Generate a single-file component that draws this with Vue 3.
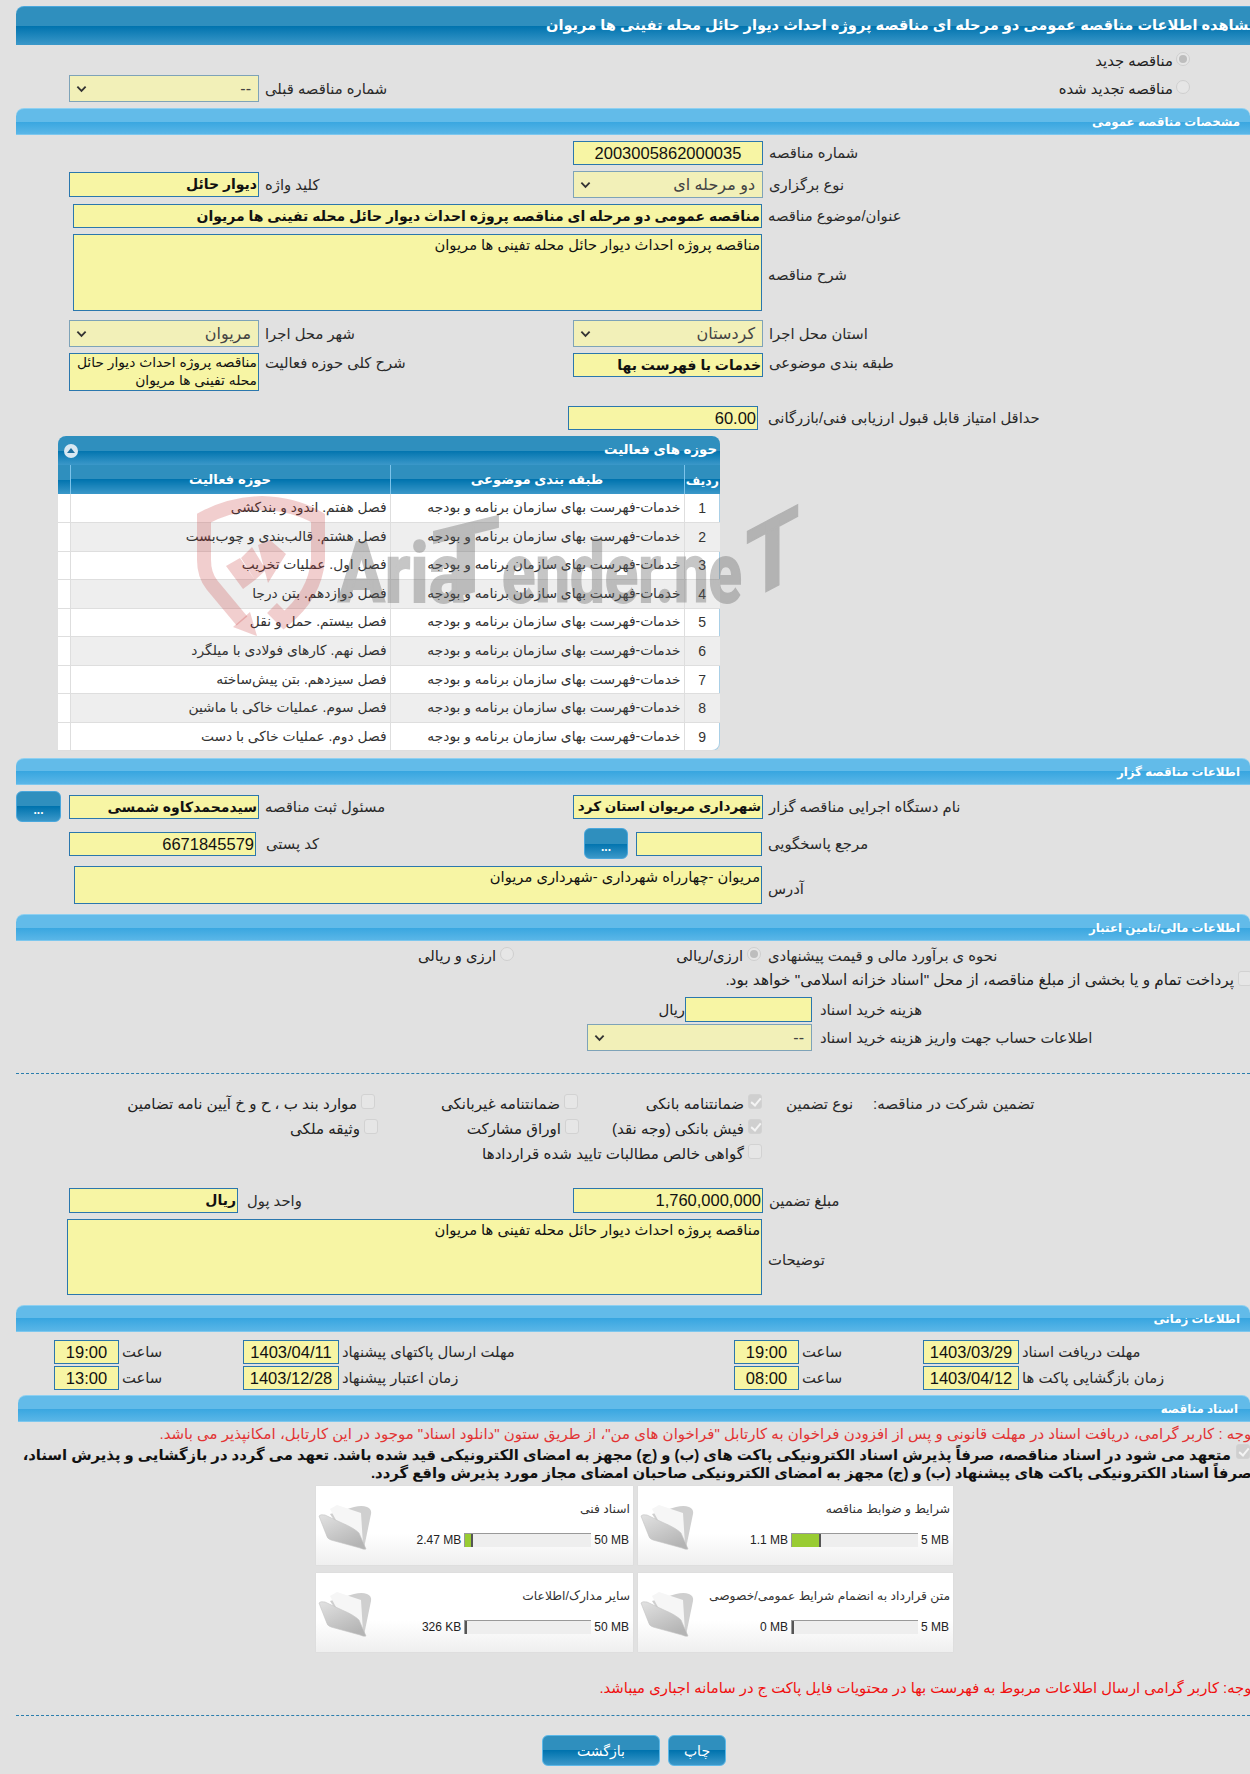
<script setup>
const activities = [
  'فصل هفتم. اندود و بندکشی',
  'فصل هشتم. قالب‌بندی و چوب‌بست',
  'فصل اول. عملیات تخریب',
  'فصل دوازدهم. بتن درجا',
  'فصل بیستم. حمل و نقل',
  'فصل نهم. کارهای فولادی با میلگرد',
  'فصل سیزدهم. بتن پیش‌ساخته',
  'فصل سوم. عملیات خاکی با ماشین',
  'فصل دوم. عملیات خاکی با دست'
]
const cards = [
  { title: 'اسناد فنی', used: '2.47 MB', max: '50 MB', fill: 6 },
  { title: 'شرایط و ضوابط مناقصه', used: '1.1 MB', max: '5 MB', fill: 27 },
  { title: 'سایر مدارک/اطلاعات', used: '326 KB', max: '50 MB', fill: 0 },
  { title: 'متن قرارداد به انضمام شرایط عمومی/خصوصی', used: '0 MB', max: '5 MB', fill: 0 }
]
</script>

<template>
  <div class="page">
    <div class="head" dir="rtl">مشاهده اطلاعات مناقصه عمومی دو مرحله ای مناقصه پروژه احداث دیوار حائل محله تفینی ها مریوان</div>

    <div class="radio-line first"><span dir="rtl">مناقصه جدید</span><i class="radio on"></i></div>
    <div class="row prev">
      <div class="field">
        <div class="select w190"><svg class="chev" viewBox="0 0 12 8"><path d="M1.5 1.5 6 6l4.5-4.5" /></svg><span>--</span></div>
        <span class="lab" dir="rtl">شماره مناقصه قبلی</span>
      </div>
      <div class="radio-line"><span dir="rtl">مناقصه تجدید شده</span><i class="radio"></i></div>
    </div>

    <div class="bar">مشخصات مناقصه عمومی</div>

    <div class="row mt6">
      <div class="col-l"></div>
      <div class="field"><div class="box w190 num center">2003005862000035</div><span class="lab" dir="rtl">شماره مناقصه</span></div>
    </div>
    <div class="row mt6">
      <div class="col-l field"><div class="box w190 h25 big" dir="rtl">دیوار حائل</div><span class="lab" dir="rtl">کلید واژه</span></div>
      <div class="field"><div class="select w190"><svg class="chev" viewBox="0 0 12 8"><path d="M1.5 1.5 6 6l4.5-4.5" /></svg><span dir="rtl">دو مرحله ای</span></div><span class="lab" dir="rtl">نوع برگزاری</span></div>
    </div>
    <div class="row mt6 pl73 field">
      <div class="box w689 big" dir="rtl">مناقصه عمومی دو مرحله ای مناقصه پروژه احداث دیوار حائل محله تفینی ها مریوان</div>
      <span class="lab" dir="rtl">عنوان/موضوع مناقصه</span>
    </div>
    <div class="row mt6 pl73 field">
      <div class="box w689 area h77" dir="rtl">مناقصه پروژه احداث دیوار حائل محله تفینی ها مریوان</div>
      <span class="lab low" dir="rtl">شرح مناقصه</span>
    </div>
    <div class="row mt9">
      <div class="col-l field"><div class="select w190"><svg class="chev" viewBox="0 0 12 8"><path d="M1.5 1.5 6 6l4.5-4.5" /></svg><span dir="rtl">مریوان</span></div><span class="lab" dir="rtl">شهر محل اجرا</span></div>
      <div class="field"><div class="select w190"><svg class="chev" viewBox="0 0 12 8"><path d="M1.5 1.5 6 6l4.5-4.5" /></svg><span dir="rtl">کردستان</span></div><span class="lab" dir="rtl">استان محل اجرا</span></div>
    </div>
    <div class="row mt6 top">
      <div class="col-l field top"><div class="box w190 area h38 tight" dir="rtl">مناقصه پروژه احداث دیوار حائل محله تفینی ها مریوان</div><span class="lab lab-top" dir="rtl">شرح کلی حوزه فعالیت</span></div>
      <div class="field top"><div class="box w190 big" dir="rtl">خدمات با فهرست بها</div><span class="lab lab-top" dir="rtl">طبقه بندی موضوعی</span></div>
    </div>
    <div class="row mt15 pl568 field gap10">
      <div class="box w190 num" dir="rtl">60.00</div>
      <span class="lab" dir="rtl">حداقل امتیاز قابل قبول ارزیابی فنی/بازرگانی</span>
    </div>

    <div class="panel">
      <div class="panel-title" dir="rtl">حوزه های فعالیت<span class="toggle"><i></i></span></div>
      <table>
        <colgroup><col class="c0" /><col class="c1" /><col class="c2" /><col class="c3" /></colgroup>
        <thead>
          <tr><th></th><th dir="rtl">حوزه فعالیت</th><th dir="rtl">طبقه بندی موضوعی</th><th dir="rtl" class="th-n">ردیف</th></tr>
        </thead>
        <tbody>
          <tr v-for="(a, i) in activities" :key="i">
            <td></td>
            <td dir="rtl">{{ a }}</td>
            <td dir="rtl">خدمات-فهرست بهای سازمان برنامه و بودجه</td>
            <td class="n">{{ i + 1 }}</td>
          </tr>
        </tbody>
      </table>
      <svg class="mark" viewBox="0 0 620 155">
        <g class="shield">
          <path class="shield-line" d="M52 131 22 95Q14 85 14 70V28Q40 14 72 13 105 14 128 28V70Q125 105 94 130L82 118" />
          <path class="shield-fill" d="M60 122 67 146 43 137ZM36 76 50 68 65 90 53 99ZM51 68 62 57 76 80 65 90ZM68 55 80 50 96 64 78 93Z" />
        </g>
        <g class="mark-text">
          <text x="148" y="112" textLength="128" lengthAdjust="spacingAndGlyphs">Aria</text>
          <text transform="translate(242 112) skewY(-14)" class="t1" textLength="68" lengthAdjust="spacingAndGlyphs">T</text>
          <text x="312" y="112" textLength="240" lengthAdjust="spacingAndGlyphs">ender.ne</text>
          <text transform="translate(556 112) skewY(-28)" class="t1" textLength="53" lengthAdjust="spacingAndGlyphs">T</text>
        </g>
      </svg>
    </div>

    <div class="bar mt7">اطلاعات مناقصه گزار</div>
    <div class="row mt6 center-row">
      <div class="col-l16 field">
        <div class="btn-dots w45">...</div>
        <div class="box w190 big mlb" dir="rtl">سیدمحمدکاوه شمسی</div>
        <span class="lab" dir="rtl">مسئول ثبت مناقصه</span>
      </div>
      <div class="field"><div class="box w190 big clip" dir="rtl">شهرداری مریوان استان کرد</div><span class="lab" dir="rtl">نام دستگاه اجرایی مناقصه گزار</span></div>
    </div>
    <div class="row mt6 center-row">
      <div class="col-l field gap10"><div class="box w187 num" dir="rtl">6671845579</div><span class="lab" dir="rtl">کد پستی</span></div>
      <div class="field pl11">
        <div class="btn-dots w44">...</div>
        <div class="box w126 mlb" dir="rtl"></div>
        <span class="lab" dir="rtl">مرجع پاسخگویی</span>
      </div>
    </div>
    <div class="row mt7 pl74 field">
      <div class="box w688 area h38" dir="rtl">مریوان -چهارراه شهرداری -شهرداری مریوان</div>
      <span class="lab low2" dir="rtl">آدرس</span>
    </div>

    <div class="bar mt10">اطلاعات مالی/تامین اعتبار</div>
    <div class="row mt6 h18">
      <div class="opt w514"><span dir="rtl">ارزی و ریالی</span><i class="radio"></i></div>
      <div class="opt w247"><span dir="rtl">ارزی/ریالی</span><i class="radio on"></i></div>
      <span class="lab ml7" dir="rtl">نحوه ی برآورد مالی و قیمت پیشنهادی</span>
    </div>
    <div class="row mt5 h20 end">
      <div class="opt"><span dir="rtl">پرداخت تمام و یا بخشی از مبلغ مناقصه، از محل "اسناد خزانه اسلامی" خواهد بود.</span><i class="check"></i></div>
    </div>
    <div class="row mt7 center-row">
      <span class="rial" dir="rtl">ریال</span>
      <div class="box w127 h25" dir="rtl"></div>
      <span class="lab ml8" dir="rtl">هزینه خرید اسناد</span>
    </div>
    <div class="row mt2 center-row pl587">
      <div class="select w225"><svg class="chev" viewBox="0 0 12 8"><path d="M1.5 1.5 6 6l4.5-4.5" /></svg><span>--</span></div>
      <span class="lab ml8" dir="rtl">اطلاعات حساب جهت واریز هزینه خرید اسناد</span>
    </div>
    <div class="dash first-dash"></div>

    <div class="g-row g1">
      <div class="opt"><span dir="rtl">موارد بند ب ، ح و خ آیین نامه تضامین</span><i class="check"></i></div>
      <div class="opt"><span dir="rtl">ضمانتنامه غیربانکی</span><i class="check"></i></div>
      <div class="opt"><span dir="rtl">ضمانتنامه بانکی</span><i class="check on"></i></div>
      <span class="lab g-type" dir="rtl">نوع تضمین</span>
      <span class="lab" dir="rtl">تضمین شرکت در مناقصه:</span>
    </div>
    <div class="g-row g2">
      <div class="opt"><span dir="rtl">وثیقه ملکی</span><i class="check"></i></div>
      <div class="opt"><span dir="rtl">اوراق مشارکت</span><i class="check"></i></div>
      <div class="opt"><span dir="rtl">فیش بانکی (وجه نقد)</span><i class="check on"></i></div>
    </div>
    <div class="g-row g3">
      <div></div>
      <div class="opt"><span dir="rtl">گواهی خالص مطالبات تایید شده قراردادها</span><i class="check"></i></div>
    </div>

    <div class="row mt22 center-row">
      <div class="col-l field"><div class="box w169 h25 big" dir="rtl">ریال</div><span class="lab ml3" dir="rtl">واحد پول</span></div>
      <div class="field"><div class="box w190 h25 num" dir="rtl">1,760,000,000</div><span class="lab" dir="rtl">مبلغ تضمین</span></div>
    </div>
    <div class="row mt6 pl67 field">
      <div class="box w695 area h76" dir="rtl">مناقصه پروژه احداث دیوار حائل محله تفینی ها مریوان</div>
      <span class="lab low3" dir="rtl">توضیحات</span>
    </div>

    <div class="bar mt10">اطلاعات زمانی</div>
    <div class="t-row mt8">
      <div class="box num center">19:00</div><span class="lab" dir="rtl">ساعت</span>
      <div class="box num center">1403/04/11</div><span class="lab" dir="rtl">مهلت ارسال پاکتهای پیشنهاد</span>
      <div class="box num center">19:00</div><span class="lab" dir="rtl">ساعت</span>
      <div class="box num center">1403/03/29</div><span class="lab" dir="rtl">مهلت دریافت اسناد</span>
    </div>
    <div class="t-row mt2">
      <div class="box num center">13:00</div><span class="lab" dir="rtl">ساعت</span>
      <div class="box num center">1403/12/28</div><span class="lab" dir="rtl">زمان اعتبار پیشنهاد</span>
      <div class="box num center">08:00</div><span class="lab" dir="rtl">ساعت</span>
      <div class="box num center">1403/04/12</div><span class="lab" dir="rtl">زمان بازگشایی پاکت ها</span>
    </div>

    <div class="bar bar18 mt5">اسناد مناقصه</div>
    <div class="note red" dir="rtl">توجه : کاربر گرامی، دریافت اسناد در مهلت قانونی و پس از افزودن فراخوان به کارتابل "فراخوان های من"، از طریق ستون "دانلود اسناد" موجود در این کارتابل، امکانپذیر می باشد.</div>
    <div class="pledge">
      <div class="pledge-line" dir="rtl"><i class="check on"></i><span>متعهد می شود در اسناد مناقصه، صرفاً پذیرش اسناد الکترونیکی پاکت های (ب) و (ج) مجهز به امضای الکترونیکی قید شده باشد. تعهد می گردد در بازگشایی و پذیرش اسناد،</span></div>
      <div class="pledge-line second" dir="rtl">صرفاً اسناد الکترونیکی پاکت های پیشنهاد (ب) و (ج) مجهز به امضای الکترونیکی صاحبان امضای مجاز مورد پذیرش واقع گردد.</div>
    </div>

    <div class="cards">
      <div v-for="c in cards" :key="c.title" class="card">
        <svg class="folder" viewBox="0 0 54 48">
          <defs>
            <linearGradient id="fold" x1="0" y1="0" x2="0.6" y2="1"><stop offset="0" stop-color="#e2e2e2" /><stop offset="1" stop-color="#b4b4b4" /></linearGradient>
          </defs>
          <path fill="#cfcfcf" d="M12 11 36 4Q44 2 49 4 54 6 53 11L46 45 26 32Z" />
          <path fill="#f6f6f6" d="M12 6 19 2 43 10 45 42 25 30Z" />
          <path fill="url(#fold)" stroke="#c4c4c4" stroke-width=".6" d="M1 13Q2 11 7 12L24 20Q36 25 41 30L48 46Q46 47 42 45L13 37Q9 36 8 31Z" />
        </svg>
        <div class="card-body">
          <div class="card-title" dir="rtl">{{ c.title }}</div>
          <div class="meter-row">
            <span>{{ c.used }}</span>
            <div class="meter"><div class="meter-fill" :style="{ width: c.fill + 'px' }"></div></div>
            <span>{{ c.max }}</span>
          </div>
        </div>
      </div>
    </div>

    <div class="note red2" dir="rtl">توجه: کاربر گرامی ارسال اطلاعات مربوط به فهرست بها در محتویات فایل پاکت ج در سامانه اجباری میباشد.</div>
    <div class="dash second-dash"></div>
    <div class="actions">
      <div class="action wide">بازگشت</div>
      <div class="action narrow">چاپ</div>
    </div>
  </div>
</template>

<style>
html, body { margin: 0; background: #e1e1e1; }
</style>

<style scoped>
.page {
  width: 1250px; height: 1774px; overflow: hidden; box-sizing: border-box; padding-top: 6px;
  background: #e1e1e1; color: #222; position: relative;
  font-family: "Liberation Sans", "DejaVu Sans", sans-serif; font-size: 14.8px; line-height: 18px;
}
.head {
  margin: 0 -8px 0 16px; height: 39px; line-height: 37px; padding-right: 0; white-space: nowrap; box-sizing: border-box;
  border-radius: 8px 0 0 0; border-top: 1px solid #4aa7dc;
  background: linear-gradient(#2f8fbe 0, #2f8fbe 50%, #0073ae 50%, #3b98c9 100%);
  color: #fff; font-weight: 700; font-size: 14.6px; text-align: right;
}
.bar {
  margin-left: 16px; height: 27px; line-height: 26px; box-sizing: border-box; padding-right: 10px;
  border-radius: 8px 8px 0 0; border-top: 1px solid #8ed0f1; border-bottom: 1px solid #7cc7ee;
  background: linear-gradient(#62bbe9 0, #62bbe9 50%, #38a6e0 50%, #5ab6e7 100%);
  color: #fff; font-weight: 700; font-size: 11.8px; text-align: right; direction: rtl;
}
.bar18 { margin-left: 18px; padding-right: 12px; }
.row { display: flex; }
.top { align-items: flex-start; }
.center-row { align-items: center; }
.field { display: flex; align-items: center; gap: 6px; }
.field.top { align-items: flex-start; }
.col-l { width: 573px; box-sizing: border-box; padding-left: 69px; flex: none; }
.col-l16 { width: 573px; box-sizing: border-box; padding-left: 16px; flex: none; }
.gap10 { gap: 10px; }
.mt2 { margin-top: 2px; } .mt5 { margin-top: 5px; } .mt6 { margin-top: 6px; } .mt7 { margin-top: 7px; } .mt8 { margin-top: 8px; }
.mt9 { margin-top: 9px; } .mt10 { margin-top: 10px; } .mt15 { margin-top: 15px; } .mt22 { margin-top: 22px; }
.pl73 { padding-left: 73px; } .pl74 { padding-left: 74px; } .pl67 { padding-left: 67px; } .pl568 { padding-left: 568px; }
.pl587 { padding-left: 587px; } .pl11 { padding-left: 11px; }
.ml3 { margin-left: 3px; } .ml7 { margin-left: 7px; } .ml8 { margin-left: 8px; }
.h18 { height: 18px; } .h20 { height: 20px; }
.end { justify-content: flex-end; margin-right: -2px; font-size: 15.3px; }

.lab { white-space: nowrap; text-align: left; color: #2a2a2a; }
.lab.low { margin-top: 4px; }
.lab.low2 { margin-top: 7px; }
.lab.low3 { margin-top: 6px; }
.lab-top { margin-top: 1px; }

.box {
  height: 24px; box-sizing: border-box; flex: none; background: #f7f5a4; border: 1px solid #2b77ad; color: #111;
  overflow: hidden; white-space: nowrap; line-height: 22px; text-align: right; padding: 0 1px;
  font-size: 14.7px;
}
.h25 { height: 25px; }
.big { font-weight: 700; font-size: 14px; }
.num { font-size: 16.5px; font-family: "Liberation Sans", sans-serif; color: #111; }
.center { text-align: center; }
.area { white-space: normal; line-height: 18px; padding-top: 1px; }
.tight { line-height: 18px; padding-top: 0; font-size: 13.8px; }
.h77 { height: 77px; } .h76 { height: 76px; } .h38 { height: 38px; }
.w126 { width: 126px; } .w127 { width: 127px; } .w169 { width: 169px; } .w187 { width: 187px; } .w190 { width: 190px; } .w225 { width: 225px; }
.w688 { width: 688px; } .w689 { width: 689px; } .w695 { width: 695px; }
.w45 { width: 45px; } .w44 { width: 44px; } .w514 { width: 514px; } .w247 { width: 247px; }
.mlb { margin-left: 2px; }

.select {
  height: 27px; box-sizing: border-box; flex: none; background: #f2f0b8; border: 1px solid #7ea3b8;
  color: #444; display: flex; align-items: center; justify-content: space-between; padding: 0 7px 0 6px;
  font-size: 16px;
}
.chev { width: 11px; height: 8px; }
.chev path { fill: none; stroke: #333; stroke-width: 2; }

.radio-line {
  display: flex; justify-content: flex-end; align-items: center; gap: 3px; height: 24px; margin-right: 60px;
}
.radio-line.first { margin-top: 4px; }
.prev { justify-content: space-between; margin-left: 69px; height: 27px; margin-top: 2px; margin-bottom: 6px; align-items: center; }
.radio {
  width: 14px; height: 14px; box-sizing: border-box; border-radius: 50%; flex: none; display: block;
  background: #e6e6e6; border: 1px solid #cfcfcf; margin-top: -4px; position: relative;
}
.radio.on::after { content: ""; position: absolute; inset: 2px; border-radius: 50%; background: #bdbdbd; }
.check {
  width: 14px; height: 15px; box-sizing: border-box; border-radius: 3px; flex: none; display: block;
  background: #e6e6e6; border: 1px solid #d2d2d2; margin-top: -4px; position: relative;
}
.check.on { background: #cfcfcf; }
.check.on::after {
  content: ""; position: absolute; left: 4px; top: 1px; width: 4px; height: 8px;
  border: solid #f4f4f4; border-width: 0 2px 2px 0; transform: rotate(40deg);
}
.opt { display: flex; justify-content: flex-end; align-items: center; gap: 4px; white-space: nowrap; }

.panel { position: relative; margin: 6px 0 0 58px; width: 662px; height: 315px; box-sizing: border-box; border-radius: 8px; background: #fff; border: 1px solid #a9cfe6; border-top: 0; }
.panel-title {
  height: 29px; margin: 0 -1px; line-height: 27px; padding-right: 3px; text-align: right; color: #fff; font-weight: 700; font-size: 13.3px;
  border-radius: 8px 8px 0 0;
  background: linear-gradient(#2f8fbe 0, #2f8fbe 50%, #0073ae 50%, #3b98c9 100%);
  position: relative;
}
.toggle { position: absolute; left: 6px; top: 8px; width: 14px; height: 14px; border-radius: 50%; background: #d8e8f2; }
.toggle i { position: absolute; left: 3px; top: 4px; width: 0; height: 0; border: 4px solid transparent; border-top: 0; border-bottom: 5px solid #1e6f9e; }
table { border-collapse: collapse; width: 662px; margin-left: -1px; table-layout: fixed; font-size: 13.8px; }
.c0 { width: 12px; } .c1 { width: 320px; } .c2 { width: 294px; } .c3 { width: 36px; }
th {
  height: 29px; padding: 0; box-sizing: border-box; color: #fff; font-weight: 700; font-size: 13.2px; text-align: center; line-height: 14px;
  border-left: 1px solid #7cc3ea;
  background: linear-gradient(#2f8fbe 0, #2f8fbe 50%, #0073ae 50%, #3b98c9 100%);
}
th:first-child { border-left: 0; }
.th-n { font-size: 12.5px; padding-top: 3px; }
td { height: 28.55px; padding: 0 3px; box-sizing: border-box; text-align: right; border-left: 1px solid #dedede; border-bottom: 1px solid #dedede; color: #333; white-space: nowrap; overflow: hidden; }
td:first-child { border-left: 0; background: #fff; }
tbody tr:nth-child(even) td:not(:first-child) { background: #eee; }
td.n { text-align: center; font-size: 14px; color: #333; }
.mark { position: absolute; left: 131px; top: 54px; width: 620px; height: 155px; overflow: visible; pointer-events: none; }
.shield-line { fill: none; stroke: rgba(196, 50, 50, 0.24); stroke-width: 14; }
.shield-fill { fill: rgba(196, 50, 50, 0.24); }
.mark-text { font-family: "Roboto", "Liberation Sans", sans-serif; font-weight: 700; font-size: 84px; fill: #5f5f5f; stroke: #5f5f5f; stroke-width: 2; opacity: 0.36; }
.t1 { font-size: 98px; }

.btn-dots {
  height: 31px; box-sizing: border-box; border-radius: 6px; border: 1px solid #4aa7dc; flex: none; text-align: center; color: #fff; font-weight: 700; font-size: 12px; line-height: 36px;
  background: linear-gradient(#2f8fbe 0, #2f8fbe 50%, #0073ae 50%, #3b98c9 100%);
}
.clip { direction: rtl; font-size: 13.5px; }

.rial { width: 685px; text-align: right; flex: none; }
.dash { border-top: 1px dashed #2b7ead; margin-left: 16px; height: 0; }
.first-dash { margin-top: 22px; }
.g-row { display: grid; height: 25px; align-items: center; font-size: 15.1px; }
.g1 { margin-top: 17px; grid-template-columns: 375px 203px 184px 111px auto; }
.g-type { margin-left: 24px; }
.g2 { grid-template-columns: 378px 201px 183px; }
.g3 { grid-template-columns: 579px 183px; }

.t-row { display: grid; grid-template-columns: 65px 124px 96px 395px 65px 124px 96px 1fr; padding-left: 54px; align-items: center; }
.t-row .lab { padding-left: 3px; }

.note { white-space: nowrap; text-align: right; margin-right: -6px; }
.red { color: #e23434; margin-top: 3px; font-size: 15px; }
.red2 { color: #f01010; margin-top: 27px; }
.pledge { font-weight: 700; font-size: 14.8px; margin-top: 3px; color: #111; }
.pledge-line { display: flex; white-space: nowrap; align-items: center; gap: 5px; height: 18px; }
.pledge-line .check { margin-top: -8px; }
.pledge-line.second { margin-right: -2px; }

.cards { display: grid; grid-template-columns: 317px 315px; grid-auto-rows: 79px; gap: 8px 5px; margin: 4px 0 0 316px; }
.card { display: flex; position: relative; box-sizing: border-box; background: linear-gradient(#fff 0, #fff 60%, #efefef 100%); box-shadow: 0 0 1px #cfcfcf; }
.folder { width: 54px; height: 48px; margin: 17px 0 0 2px; flex: none; }
.card-body { flex: 1; }
.card-title { text-align: right; padding: 14px 3px 0 0; color: #333; font-size: 12.3px; white-space: nowrap; }
.meter-row { display: flex; justify-content: flex-end; align-items: center; gap: 3px; margin-top: 13px; padding-right: 4px; color: #222; font-size: 12px; }
.meter { width: 127px; height: 14px; box-sizing: border-box; background: #eee; border-top: 1px solid #999; border-left: 1px solid #999; display: flex; }
.meter-fill { background: #99cc33; border-right: 2px solid #555; height: 13px; }

.second-dash { margin-top: 18px; margin-left: 16px; }
.actions { display: flex; gap: 8px; padding-left: 542px; margin-top: 19px; }
.action {
  height: 31px; box-sizing: border-box; border-radius: 6px; border: 1px solid #5cb8e8; color: #fff; text-align: center; line-height: 30px; font-size: 14px;
  background: linear-gradient(#2f8fbe 0, #2f8fbe 50%, #0073ae 50%, #3b98c9 100%);
}
.wide { width: 118px; } .narrow { width: 58px; }
</style>
